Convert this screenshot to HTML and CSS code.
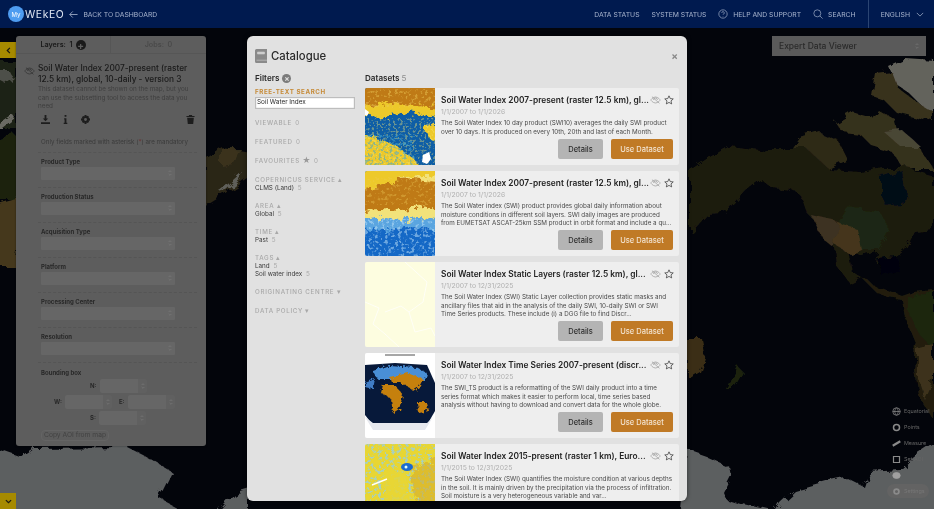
FILE: index.html
```html
<!DOCTYPE html>
<html lang="en">
<head>
<meta charset="utf-8">
<title>MyWEkEO Catalogue</title>
<link rel="stylesheet" href="styles.css">
</head>
<body>
<svg class="defs" aria-hidden="true">
  <defs>
    <filter id="coast" x="-5%" y="-5%" width="110%" height="110%"><feTurbulence type="fractalNoise" baseFrequency=".07" numOctaves="4" seed="5" result="n"/><feDisplacementMap in="SourceGraphic" in2="n" scale="11"/><feGaussianBlur stdDeviation=".5"/></filter>
    <filter id="rough" x="-10%" y="-10%" width="120%" height="120%"><feTurbulence type="fractalNoise" baseFrequency=".16" numOctaves="4" seed="7" result="n"/><feDisplacementMap in="SourceGraphic" in2="n" scale="13"/></filter>
    <filter id="rough2" x="-10%" y="-10%" width="120%" height="120%"><feTurbulence type="fractalNoise" baseFrequency=".25" numOctaves="4" seed="3" result="n"/><feDisplacementMap in="SourceGraphic" in2="n" scale="7"/></filter>
    <filter id="speckY" x="0" y="0" width="100%" height="100%"><feTurbulence type="fractalNoise" baseFrequency=".42" numOctaves="3" seed="4"/><feColorMatrix values="0 0 0 0 .93 0 0 0 0 .79 0 0 0 0 .17 0 0 0 7 -3.700"/></filter>
    <filter id="speckW" x="0" y="0" width="100%" height="100%"><feTurbulence type="fractalNoise" baseFrequency=".3" numOctaves="3" seed="9"/><feColorMatrix values="0 0 0 0 .55 0 0 0 0 .78 0 0 0 0 .95 0 0 0 6 -3.100"/></filter>
    <filter id="speckO" x="0" y="0" width="100%" height="100%"><feTurbulence type="fractalNoise" baseFrequency=".3" numOctaves="3" seed="12"/><feColorMatrix values="0 0 0 0 .85 0 0 0 0 .6 0 0 0 0 .1 0 0 0 7 -3.900"/></filter>
    <filter id="speckD" x="0" y="0" width="100%" height="100%"><feTurbulence type="fractalNoise" baseFrequency=".36" numOctaves="3" seed="21"/><feColorMatrix values="0 0 0 0 .05 0 0 0 0 .37 0 0 0 0 .65 0 0 0 7 -3.600"/></filter>
    <filter id="speckB" x="0" y="0" width="100%" height="100%"><feTurbulence type="fractalNoise" baseFrequency=".3" numOctaves="3" seed="2"/><feColorMatrix values="0 0 0 0 .3 0 0 0 0 .62 0 0 0 0 .82 0 0 0 7 -3.700"/></filter>
    <symbol id="eye" viewBox="0 0 14 10"><path d="M1 5s2.400-3.800 6-3.800S13 5 13 5 10.600 8.800 7 8.800 1 5 1 5ZM2.500 .8l9.500 8.400M4.500 5a2.500 2.500 0 0 1 5 0"/></symbol>
    <symbol id="star" viewBox="0 0 12 12"><path d="M6 1l1.500 3.300 3.600.4-2.700 2.400.8 3.600L6 8.900l-3.200 1.800.8-3.600L.9 4.700l3.600-.4Z"/></symbol>
    <symbol id="updown" viewBox="0 0 6 9"><path d="m1 3 2-2 2 2M1 6l2 2 2-2"/></symbol>
  </defs>
</svg>
<div class="app">
  <header class="topbar">
    <div class="brand"><span class="my">My</span><span class="wekeo">WEkEO</span></div>
    <a class="back"><svg class="ico-back" viewBox="0 0 10 10"><path d="M9.500 5H.8M4.200 1.600.8 5l3.400 3.400"/></svg>BACK TO DASHBOARD</a>
    <nav class="nav">
      <a>DATA STATUS</a>
      <a class="sys">SYSTEM STATUS</a>
      <a class="with-icon"><svg class="ico-nav" viewBox="0 0 12 12"><circle cx="6" cy="6" r="5"/><path d="M4.500 4.700a1.500 1.500 0 1 1 2.200 1.300c-.5.3-.7.6-.7 1.100M6 8.600v.5"/></svg>HELP AND SUPPORT</a>
      <a class="with-icon"><svg class="ico-nav" viewBox="0 0 12 12"><circle cx="5.200" cy="5.200" r="4.200"/><path d="m8.200 8.200 3.300 3.300"/></svg>SEARCH</a>
      <a class="lang">ENGLISH<svg class="ico-chev" viewBox="0 0 10 6"><path d="m1 1 4 4 4-4"/></svg></a>
    </nav>
  </header>

  <main class="stage">
    <svg class="map" viewBox="0 0 934 481" preserveAspectRatio="none">
      <rect width="934" height="481" fill="#03050b"/>
      <g transform="translate(0 -28)" filter="url(#coast)">
        <!-- Greenland and Arctic islands -->
        <path fill="#64635c" d="M888 66 905 58 934 60V112L922 106 908 92 896 84Z"/>
        <path fill="#37311d" d="M876 74 892 72 898 88 914 100 934 112V122L912 116 896 112 884 100 872 96Z"/>
        <path fill="#36301c" d="M835 122 852 112 872 118 878 110 896 120 900 136 918 146 934 170H905L892 152 872 146 860 134 842 132Z"/>
        <path fill="#2e2917" d="M800 138 820 132 838 140 848 160 826 170H800L792 150Z"/>
        <path fill="#4a4636" d="M884 132 902 130 920 146 900 146Z"/>
        <!-- North America main -->
        <path fill="#1f1c10" d="M690 170 708 158 730 146 760 150 770 148 806 148 830 170 860 172 884 168 905 168 934 176V230L915 232 905 250 890 262 875 262 877 252 862 256 848 250 852 272 862 278 850 284 837 266 835 248 822 238 816 222 806 212 800 195 792 190 772 188 760 178 745 190 725 213 706 214 690 232Z"/>
        <path fill="#060c18" d="M880 177 902 170 905 190 902 206 888 208 880 195Z"/>
        <path fill="#1b2612" d="M849 208 880 212 890 232 880 250 862 250 848 246 840 222Z"/>
        <path fill="#45361e" d="M838 222 844 226 858 230 862 250 850 254 836 246 826 236 834 226Z"/>
        <path fill="#3d3220" d="M812 216 838 222 834 248 822 238Z"/>
        <path fill="#03060d" d="M876 258 896 256 900 272 882 276Z"/>
        <!-- Central America + South America -->
        <path fill="#211f10" d="M862 278 876 286 892 292 902 296 913 292 934 290V420L925 407 918 395 914 370 916 345 905 318 902 300 888 298 874 290Z"/>
        <path fill="#1a2610" d="M908 298 934 292V350L920 335 908 312Z"/>
        <path fill="#3d331b" d="M917 350 934 345V380L925 400 917 378Z"/>
        <!-- Australia and NZ -->
        <path fill="#3a2e15" d="M687 340H703L706 355 700 372 690 378 687 376Z"/>
        <path fill="#1c2410" d="M738 366 743 372 733 390 727 390Z"/>
        <!-- Antarctica right -->
        <path fill="#5c5e60" d="M687 450 707 457 730 467 732 477 724 493 727 500 744 505 775 512 780 503 794 490 830 480 844 477 864 487 869 472 900 470 914 457 940 440V520H680Z"/>
        <!-- Far west land: Asia -->
        <path fill="#1d2015" d="M-6 60H16V128L-6 128Z"/>
        <path fill="#6a6a64" d="M-6 128 13 115 15 118 2 128Z"/>
        <path fill="#64645e" d="M-6 70 8 70 14 78 6 84-6 78Z" opacity=".7"/>
        <path fill="#1b2410" d="M-6 140 12 132 20 140V200H-6Z"/>
        <path fill="#45391f" d="M-6 205 20 198V240L14 266H-6Z"/>
        <!-- Russia far east strip -->
        <path fill="#2a2515" d="M204 158 222 147 250 152V176L232 188 220 197 204 207Z"/>
        <path fill="#3e3720" d="M222 148 240 148 234 164 222 166Z" opacity=".8"/>
        <path fill="#5f5f5a" d="M218 192 233 180 242 172 240 178 226 190Z"/>
        <!-- Antarctica left -->
        <path fill="#5c5e60" d="M-6 448 20 457 33 448 127 447 143 455 172 472 163 490 158 498 190 515H-6Z"/>
        <path fill="#5c5e60" d="M213 515 233 493 250 488V515Z"/>
      </g>
    </svg>

    <button class="side-toggle top"><svg viewBox="0 0 6 8"><path d="M4.600 1 1.600 4l3 3"/></svg></button>
    <button class="side-toggle bottom"><svg viewBox="0 0 8 6"><path d="m1 1.400 3 3 3-3"/></svg></button>

    <div class="viewer-select">Expert Data Viewer<svg class="updown"><use href="#updown"/></svg></div>

    <ul class="tools">
      <li><svg viewBox="0 0 12 12"><circle cx="6" cy="6" r="5"/><path d="M1 6h10M6 1c-3 3-3 7 0 10M6 1c3 3 3 7 0 10"/></svg>Equatorial</li>
      <li><svg viewBox="0 0 12 12"><circle cx="6" cy="6" r="4" stroke-width="2"/></svg>Points</li>
      <li><svg viewBox="0 0 12 12"><path d="M1 9 11 3" stroke-width="3"/></svg>Measure</li>
      <li><svg viewBox="0 0 12 12"><path d="M2 2h8v8H2z" stroke-width="1.600"/></svg>Set AOI</li>
      <li><svg viewBox="0 0 12 12"><ellipse cx="6" cy="6" rx="5" ry="4" class="solid"/></svg></li>
      <li class="tool-settings"><svg viewBox="0 0 12 12"><circle cx="6" cy="6" r="3.200" stroke-width="2.400"/></svg>Settings</li>
    </ul>

    <aside class="layers">
      <div class="tabs">
        <div class="tab active">Layers:&nbsp; 1 <span class="plus">+</span></div>
        <div class="tab">Jobs:&nbsp; 0</div>
      </div>
      <div class="layer-head">
        <svg class="eye"><use href="#eye"/></svg>
        <div>
          <h2>Soil Water Index 2007-present (raster 12.5 km), global, 10-daily - version 3</h2>
          <p>This dataset cannot be shown on the map, but you can use the subsetting tool to access the data you need</p>
        </div>
      </div>
      <div class="layer-tools">
        <span class="tool-btn"><svg viewBox="0 0 10 10"><path d="M4 0h2v4h2L5 7 2 4h2zM0 8h10v2H0z"/></svg></span>
        <span class="tool-btn"><svg viewBox="0 0 10 10"><path d="M4 0h2v2H4zM3.500 3.500H6V8.500H7V10H3V8.500H4V5H3.500z"/></svg></span>
        <span class="tool-btn"><svg viewBox="0 0 10 10"><path fill-rule="evenodd" d="M4 0h2l.3 1.400 1.300-.7 1.400 1.400-.7 1.300L10 4v2l-1.700.3.700 1.300L7.600 9l-1.300-.7L6 10H4l-.3-1.700L2.400 9 1 7.600l.7-1.300L0 6V4l1.700-.3L1 2.400 2.400 1l1.300.7zM5 3.400a1.600 1.600 0 1 0 0 3.200 1.600 1.600 0 0 0 0-3.200z"/></svg></span>
        <span class="tool-btn trash"><svg viewBox="0 0 10 10"><path d="M3.500 0h3l.5 1h2.500v1.200H.5V1H3zM1.300 3h7.400L8 10H2z"/></svg></span>
      </div>
      <form class="subset">
        <p class="mandatory">Only fields marked with asterisk (<b>*</b>) are mandatory</p>
        <label class="field">Product Type<span class="select"><svg class="updown"><use href="#updown"/></svg></span></label>
        <label class="field">Production Status<span class="select"><svg class="updown"><use href="#updown"/></svg></span></label>
        <label class="field">Acquisition Type<span class="select"><svg class="updown"><use href="#updown"/></svg></span></label>
        <label class="field">Platform<span class="select"><svg class="updown"><use href="#updown"/></svg></span></label>
        <label class="field">Processing Center<span class="select"><svg class="updown"><use href="#updown"/></svg></span></label>
        <label class="field">Resolution<span class="select"><svg class="updown"><use href="#updown"/></svg></span></label>
        <div class="bbox">
          <div class="bbox-title">Bounding box</div>
          <div class="bbox-row single"><span class="coord">N:<span class="spin"><svg class="updown"><use href="#updown"/></svg></span></span></div>
          <div class="bbox-row double"><span class="coord">W:<span class="spin"><svg class="updown"><use href="#updown"/></svg></span></span><span class="coord">E:<span class="spin"><svg class="updown"><use href="#updown"/></svg></span></span></div>
          <div class="bbox-row single"><span class="coord">S:<span class="spin"><svg class="updown"><use href="#updown"/></svg></span></span></div>
          <span class="copy-aoi">Copy AOI from map</span>
        </div>
      </form>
    </aside>

    <section class="catalogue">
      <header class="cat-head">
        <svg class="book" viewBox="0 0 12 14"><path d="M1.500 0H12V14H1.500A1.500 1.500 0 0 1 0 12.500V1.500A1.500 1.500 0 0 1 1.500 0Z"/><path class="book-mark" d="M2.500 3h7v2h-7zM1.500 11.200H12"/></svg>
        <h1>Catalogue</h1>
        <span class="close">×</span>
      </header>
      <div class="cat-body">
        <div class="filters">
          <h3>Filters <span class="clear">×</span></h3>
          <div class="f-title accent">FREE-TEXT SEARCH</div>
          <div class="search">Soil Water Index</div>
          <div class="f-title gap">VIEWABLE <i>0</i></div>
          <div class="f-title gap">FEATURED <i>0</i></div>
          <div class="f-title gap">FAVOURITES <span class="star">★</span> <i>0</i></div>
          <div class="f-title gap">COPERNICUS SERVICE <span class="caret">▴</span></div>
          <div class="f-item">CLMS (Land) <i>5</i></div>
          <div class="f-title gap2">AREA <span class="caret">▴</span></div>
          <div class="f-item">Global <i>5</i></div>
          <div class="f-title gap2">TIME <span class="caret">▴</span></div>
          <div class="f-item">Past <i>5</i></div>
          <div class="f-title gap2">TAGS <span class="caret">▴</span></div>
          <div class="f-item">Land <i>5</i></div>
          <div class="f-item">Soil water index <i>5</i></div>
          <div class="f-title gap">ORIGINATING CENTRE <span class="caret">▾</span></div>
          <div class="f-title gap">DATA POLICY <span class="caret">▾</span></div>
        </div>
        <div class="datasets">
          <h3>Datasets <i>5</i></h3>

          <article class="card c1">
            <svg class="thumb" viewBox="0 0 70 77" preserveAspectRatio="none">
              <rect width="70" height="77" fill="#0e5ea6"/>
              <g filter="url(#rough)">
                <path fill="#edc92c" d="M-8 26 20 30 46 24 78 30V-8H-8Z"/>
                <path fill="#bf7a12" d="M-8 -8H78V20L50 18 30 14 12 18-8 17Z"/>
                <path fill="#edc92c" d="M-8 48 14 50 34 60 48 70 60 86H-8Z"/>
                <path fill="#edc92c" d="M58 40 78 30V56L66 52Z"/>
              </g>
              <rect width="70" height="20" filter="url(#speckO)" opacity=".45"/>
              <rect y="30" width="70" height="47" filter="url(#speckY)" opacity=".4"/>
              <rect y="46" width="50" height="31" filter="url(#speckD)" opacity=".55"/>
              <path fill="#fff" d="M58 67 64 64 66 71 62 76 57 74ZM0 21 4 24 2 28 0 27Z"/>
            </svg>
            <div class="card-body">
              <div class="card-title"><span class="t">Soil Water Index 2007-present (raster 12.5 km), gl...</span><svg class="eye"><use href="#eye"/></svg><svg class="fav"><use href="#star"/></svg></div>
              <div class="card-date">1/1/2007 to 1/1/2026</div>
              <p class="card-desc">The Soil Water Index 10 day product (SWI10) averages the daily SWI product over 10 days. It is produced on every 10th, 20th and last of each Month.</p>
              <div class="card-actions"><span class="btn grey">Details</span><span class="btn orange">Use Dataset</span></div>
            </div>
          </article>

          <article class="card">
            <svg class="thumb" viewBox="0 0 70 85" preserveAspectRatio="none">
              <rect width="70" height="85" fill="#1468c6"/>
              <g filter="url(#rough)">
                <path fill="#5aa5e0" d="M-8 40H78V60L50 56 20 60-8 58Z"/>
                <path fill="#f2e27a" d="M-8 -8H78V50L56 46 40 50 20 46-8 50Z"/>
                <path fill="#bf7a12" d="M-8 12 20 10 50 8 78 12V38L54 36 38 40 16 39-8 40Z"/>
                <path fill="#edc92c" d="M-8 -8H78V4L40 6 20 14-8 20Z"/>
              </g>
              <rect y="48" width="70" height="37" filter="url(#speckW)" opacity=".5"/>
              <rect y="6" width="70" height="28" filter="url(#speckO)" opacity=".35"/>
            </svg>
            <div class="card-body">
              <div class="card-title"><span class="t">Soil Water Index 2007-present (raster 12.5 km), gl...</span><svg class="eye"><use href="#eye"/></svg><svg class="fav"><use href="#star"/></svg></div>
              <div class="card-date">1/1/2007 to 1/1/2026</div>
              <p class="card-desc">The Soil Water index (SWI) product provides global daily information about moisture conditions in different soil layers. SWI daily images are produced from EUMETSAT ASCAT-25km SSM product in orbit format and include a qu...</p>
              <div class="card-actions"><span class="btn grey">Details</span><span class="btn orange">Use Dataset</span></div>
            </div>
          </article>

          <article class="card">
            <svg class="thumb" viewBox="0 0 70 85" preserveAspectRatio="none">
              <rect width="70" height="85" fill="#fdfde0"/>
              <path fill="none" stroke="#fff" stroke-width=".7" d="M0 40 14 46 8 62 20 72 34 85M40 0 62 20 58 40 44 50 50 70 66 66 70 74M20 50 36 44 44 50"/>
            </svg>
            <div class="card-body">
              <div class="card-title"><span class="t">Soil Water Index Static Layers (raster 12.5 km), gl...</span><svg class="eye"><use href="#eye"/></svg><svg class="fav"><use href="#star"/></svg></div>
              <div class="card-date">1/1/2007 to 12/31/2025</div>
              <p class="card-desc">The Soil Water Index (SWI) Static Layer collection provides static masks and ancillary files that aid in the analysis of the daily SWI, 10-daily SWI or SWI Time Series products. These include (i) a DGG file to find Discr...</p>
              <div class="card-actions"><span class="btn grey">Details</span><span class="btn orange">Use Dataset</span></div>
            </div>
          </article>

          <article class="card">
            <svg class="thumb" viewBox="0 0 70 85" preserveAspectRatio="none">
              <rect width="70" height="85" fill="#fff"/>
              <path fill="#07193a" d="M0 12 30 10 62 12 70 30 70 58 62 72H8L0 62Z"/>
              <g filter="url(#rough2)">
                <path fill="#4a8fd6" d="M8 18 24 12 50 14 62 20 60 28 30 26 12 26Z"/>
                <path fill="#3f7cc4" d="M0 30 10 26 8 36 0 34Z"/>
                <path fill="#c5800f" d="M24 24 44 20 58 26 54 34 48 38 44 34 36 30 28 30Z"/>
                <path fill="#c5800f" d="M18 32 30 32 38 42 34 56 28 60 26 46 16 40Z"/>
                <path fill="#c5800f" d="M52 50 62 50 64 58 54 60Z"/>
              </g>
              <path fill="#e6e8ee" d="M0 64 8 70H62L68 64 60 77H8Z"/>
              <path stroke="#222" stroke-width=".8" d="M20 2H50"/>
            </svg>
            <div class="card-body">
              <div class="card-title"><span class="t">Soil Water Index Time Series 2007-present (discr...</span><svg class="eye"><use href="#eye"/></svg><svg class="fav"><use href="#star"/></svg></div>
              <div class="card-date">1/1/2007 to 12/31/2025</div>
              <p class="card-desc">The SWI_TS product is a reformatting of the SWI daily product into a time series format which makes it easier to perform local, time series based analysis without having to download and convert data for the whole globe.</p>
              <div class="card-actions"><span class="btn grey">Details</span><span class="btn orange">Use Dataset</span></div>
            </div>
          </article>

          <article class="card">
            <svg class="thumb" viewBox="0 0 70 85" preserveAspectRatio="none">
              <rect width="70" height="85" fill="#e8d632"/>
              <rect width="70" height="85" filter="url(#speckB)" opacity=".75"/>
              <g filter="url(#rough)"><path fill="#d6a82a" d="M46 26 78 10V70L50 56Z" opacity=".55"/><path fill="#e8d632" d="M18 24 40 30 46 60 20 66Z" opacity=".8"/></g>
              <ellipse cx="42" cy="23" rx="6" ry="4" fill="#1b6bd0"/>
              <circle cx="41" cy="23" r="1.500" fill="#dff"/>
              <path stroke="#fff" stroke-width="1.500" d="M7 41 22 35"/>
            </svg>
            <div class="card-body">
              <div class="card-title"><span class="t">Soil Water Index 2015-present (raster 1 km), Euro...</span><svg class="eye"><use href="#eye"/></svg><svg class="fav"><use href="#star"/></svg></div>
              <div class="card-date">1/1/2015 to 12/31/2025</div>
              <p class="card-desc">The Soil Water Index (SWI) quantifies the moisture condition at various depths in the soil. It is mainly driven by the precipitation via the process of infiltration. Soil moisture is a very heterogeneous variable and var...</p>
            </div>
          </article>
        </div>
      </div>
    </section>
  </main>
</div>
</body>
</html>
```

FILE: styles.css
```css
* { box-sizing: border-box; }
html, body { margin: 0; height: 100%; overflow: hidden; background: #03050b; }
body { font-family: Inter, "Liberation Sans", sans-serif; }
.defs { position: absolute; width: 0; height: 0; }
.app { width: 934px; height: 509px; display: flex; flex-direction: column; filter: blur(.4px); }

.topbar { height: 28px; flex: none; background: #001a4f; color: #a9b6cf; display: flex; align-items: center; font-size: 6.800px; padding-left: 8px; }
.brand { display: flex; align-items: center; gap: 1px; color: #dfe6f2; }
.my { width: 16px; height: 16px; border-radius: 50%; background: #4e9cf0; color: #e8f2ff; font-size: 6px; font-weight: 500; display: flex; align-items: center; justify-content: center; }
.wekeo { font-size: 10.400px; letter-spacing: .6px; font-weight: 400; }
.back { display: flex; align-items: center; gap: 5px; margin-left: 5px; }
.ico-back { width: 9px; height: 9px; fill: none; stroke: #a9b6cf; stroke-width: .9; }
.nav { margin-left: auto; display: flex; align-items: center; height: 100%; gap: 12px; }
.sys { letter-spacing: -.1px; }
.with-icon { display: flex; align-items: center; gap: 5px; }
.ico-nav { width: 10px; height: 10px; fill: none; stroke: #a9b6cf; stroke-width: .8; }
.lang { height: 100%; border-left: 1px solid #2b4573; padding: 0 10px 0 12px; display: flex; align-items: center; gap: 6px; }
.ico-chev { width: 8px; height: 5px; fill: none; stroke: #a9b6cf; stroke-width: .9; }

.stage { flex: 1; position: relative; overflow: hidden; }
.map { position: absolute; inset: 0; width: 100%; height: 100%; }

.side-toggle { position: absolute; left: 0; width: 16px; height: 16px; padding: 0; border: 0; background: #a68a00; display: flex; align-items: center; justify-content: center; }
.side-toggle svg { width: 7px; height: 7px; fill: none; stroke: #1c1a10; stroke-width: 1.400; }
.side-toggle.top { top: 14px; }
.side-toggle.bottom { bottom: 0; }

.viewer-select { position: absolute; left: 772px; top: 8px; width: 154px; height: 20px; background: #5a5a5a; color: #2a2a2a; font-size: 8.500px; font-weight: 500; display: flex; align-items: center; justify-content: space-between; padding: 0 7px; }
.updown { width: 4px; height: 6px; fill: none; stroke: #808080; stroke-width: .9; flex: none; }

.tools { position: absolute; left: 892px; top: 377.500px; margin: 0; padding: 0; list-style: none; color: #666; font-size: 5.400px; display: flex; flex-direction: column; gap: 5px; }
.tools li { display: flex; align-items: center; gap: 3px; height: 11px; white-space: nowrap; }
.tools svg { width: 9px; height: 9px; fill: none; stroke: #8a8a8a; stroke-width: 1; flex: none; }
.tools .solid { fill: #a0a0a0; stroke: #a0a0a0; }
.tool-settings { background: #636363; border-radius: 7px; margin-left: -5px; padding-left: 5px; height: 14px !important; color: #777; margin-top: -1.500px; }

.layers { position: absolute; left: 16px; top: 8px; width: 190px; height: 410px; background: #5d5d5d; border-radius: 3px; color: #1d1d1d; box-shadow: 0 0 2px rgba(0,0,0,.5); display: flex; flex-direction: column; }
.tabs { display: flex; height: 18px; flex: none; font-size: 7.200px; font-weight: 600; border-bottom: 1px solid #565656; }
.tab { flex: 1; display: flex; align-items: center; justify-content: center; color: #4a4a4a; gap: 3px; }
.tab.active { color: #1a1a1a; border-right: 1px solid #565656; flex: 0 0 95px; }
.plus { width: 10px; height: 10px; border-radius: 50%; background: #1a1a1a; color: #5d5d5d; font-size: 10px; line-height: 10px; text-align: center; font-weight: 700; }
.layer-head { display: flex; gap: 3px; padding: 9px 16px 0 8px; flex: none; }
.layer-head .eye { width: 11px; height: 8px; margin-top: 4px; flex: none; fill: none; stroke: #353535; stroke-width: 1; }
.layer-head h2 { margin: 0; font-size: 8.300px; line-height: 11px; font-weight: 500; color: #1a1a1a; }
.layer-head p { margin: 0; font-size: 6.300px; line-height: 8.500px; color: #3e3e3e; }
.layer-tools { display: flex; gap: 6px; padding: 0 9px 0 22px; margin-top: 2px; flex: none; }
.tool-btn { width: 14px; height: 14px; display: flex; align-items: center; justify-content: center; }
.tool-btn svg { width: 9px; height: 9px; fill: #1d1d1d; }
.tool-btn.trash { margin-left: auto; }
.subset { margin: 6px 9px 0 22px; padding: 0 3px; color: #282828; display: flex; flex-direction: column; flex: none; }
.mandatory { margin: 0 -3px; padding: 5px 3px 6px; font-size: 6.200px; line-height: 8px; color: #3a3a3a; border-bottom: 1px dashed #555; white-space: nowrap; }
.mandatory b { color: #6b2f2f; font-weight: 400; }
.field { display: block; margin: 0 -3px; padding: 5px 3px 0; font-weight: 700; font-size: 6px; line-height: 7px; border-bottom: 1px dashed #555; height: 35px; flex: none; }
.select { display: flex; align-items: center; justify-content: flex-end; height: 13px; width: 134px; margin-top: 2px; background: #666; border-radius: 1px; padding-right: 3px; }
.bbox { padding-top: 6px; font-size: 6px; font-weight: 700; }
.bbox-title { line-height: 7px; margin-bottom: 3px; }
.bbox-row { display: flex; gap: 7px; margin-bottom: 2px; height: 14px; }
.bbox-row.single { padding-left: 49px; }
.bbox-row.double { padding-left: 13px; }
.coord { display: flex; align-items: center; gap: 3px; }
.spin { width: 47px; height: 14px; background: #666; border-radius: 2px; border-right: 9px solid #606060; position: relative; }
.spin .updown { position: absolute; right: -7px; top: 4px; }
.copy-aoi { display: inline-block; margin: 3px 0 0 0; padding: 0 2px; line-height: 9px; border: 1px solid #646464; border-radius: 4px; font-weight: 400; font-size: 6.700px; color: #424242; white-space: nowrap; }

.catalogue { position: absolute; left: 247px; top: 8px; width: 440px; height: 465px; background: #e1e1e1; border-radius: 6px; overflow: hidden; color: #232323; box-shadow: 0 0 4px rgba(0,0,0,.5); display: flex; flex-direction: column; }
.cat-head { display: flex; align-items: center; padding: 4px 9px 0 8px; flex: none; height: 36px; gap: 4px; }
.book { width: 12px; height: 14px; fill: #8a8a8a; }
.book-mark { fill: #cfcfcf; stroke: #cfcfcf; stroke-width: .6; }
.cat-head h1 { margin: 0; font-size: 11.300px; font-weight: 500; color: #2a2a2a; }
.close { margin-left: auto; color: #888; font-size: 10px; font-weight: 700; line-height: 10px; }
.cat-body { display: flex; flex: 1; min-height: 0; padding: 0 8px; }
.filters { width: 110px; flex: none; }
.filters h3, .datasets h3 { margin: 0 0 4px; font-size: 8.100px; font-weight: 600; line-height: 12px; color: #2a2a2a; }
.clear { display: inline-block; width: 9px; height: 9px; border-radius: 50%; background: #7b7b7b; color: #e1e1e1; font-size: 8px; line-height: 9px; text-align: center; margin-left: 1px; }
.datasets h3 i { font-style: normal; font-weight: 400; color: #8f8f8f; }
.f-title { font-size: 6.200px; line-height: 8px; letter-spacing: .7px; color: #a8a8a8; font-weight: 500; white-space: nowrap; }
.f-title i, .f-item i { font-style: normal; color: #a8a8a8; font-weight: 400; margin-left: 1px; }
.f-title.accent { color: #c68a36; font-weight: 700; letter-spacing: .6px; }
.f-title.gap { margin-top: 10.500px; }
.f-title.gap2 { margin-top: 10px; }
.caret { font-size: 7px; letter-spacing: 0; }
.star { font-size: 8px; letter-spacing: 0; color: #9a9a9a; line-height: 8px; }
.search { margin: 1px 0 0; width: 100px; height: 11.500px; background: #fff; border: 1px solid #bdbdbd; box-shadow: inset 0 0 1px #888; font-size: 6.400px; line-height: 9.500px; padding-left: 1px; color: #2a2a2a; }
.f-item { font-size: 6.300px; line-height: 8px; color: #3a3a3a; }
.f-item i { margin-left: 2px; }
.datasets { width: 314px; flex: none; }
.card { display: flex; background: #eeeeee; height: 85px; margin-bottom: 6px; border-radius: 2px; overflow: hidden; }
.card.c1 { height: 77px; }
.thumb { width: 70px; height: 100%; flex: none; display: block; }
.card-body { flex: 1; min-width: 0; padding: 6px 5px 0 6px; display: flex; flex-direction: column; position: relative; }
.card-title { display: flex; align-items: center; height: 12px; }
.card-title .t { font-size: 8.350px; font-weight: 600; color: #242424; white-space: nowrap; flex: 1; overflow: hidden; }
.card-title .eye { width: 11px; height: 8px; flex: none; fill: none; stroke: #a2a2a2; stroke-width: 1; margin: 0 3px 0 0; }
.card-title .fav { width: 10px; height: 10px; flex: none; fill: none; stroke: #3a3a3a; stroke-width: .9; }
.card-date { font-size: 6.800px; line-height: 9px; color: #b0b0b0; margin-top: 1px; }
.card-desc { margin: 3px 1px 0 0; font-size: 6.270px; line-height: 8.500px; color: #4a4a4a; }
.card-actions { position: absolute; right: 6px; bottom: 6px; display: flex; gap: 8px; }
.btn { height: 20px; border-radius: 2px; display: flex; align-items: center; justify-content: center; font-size: 7.500px; font-weight: 500; }
.btn.grey { width: 45px; background: #b4b4b4; color: #2f2f2f; }
.btn.orange { width: 62px; background: #c07a26; color: #f2e3d0; }
```
